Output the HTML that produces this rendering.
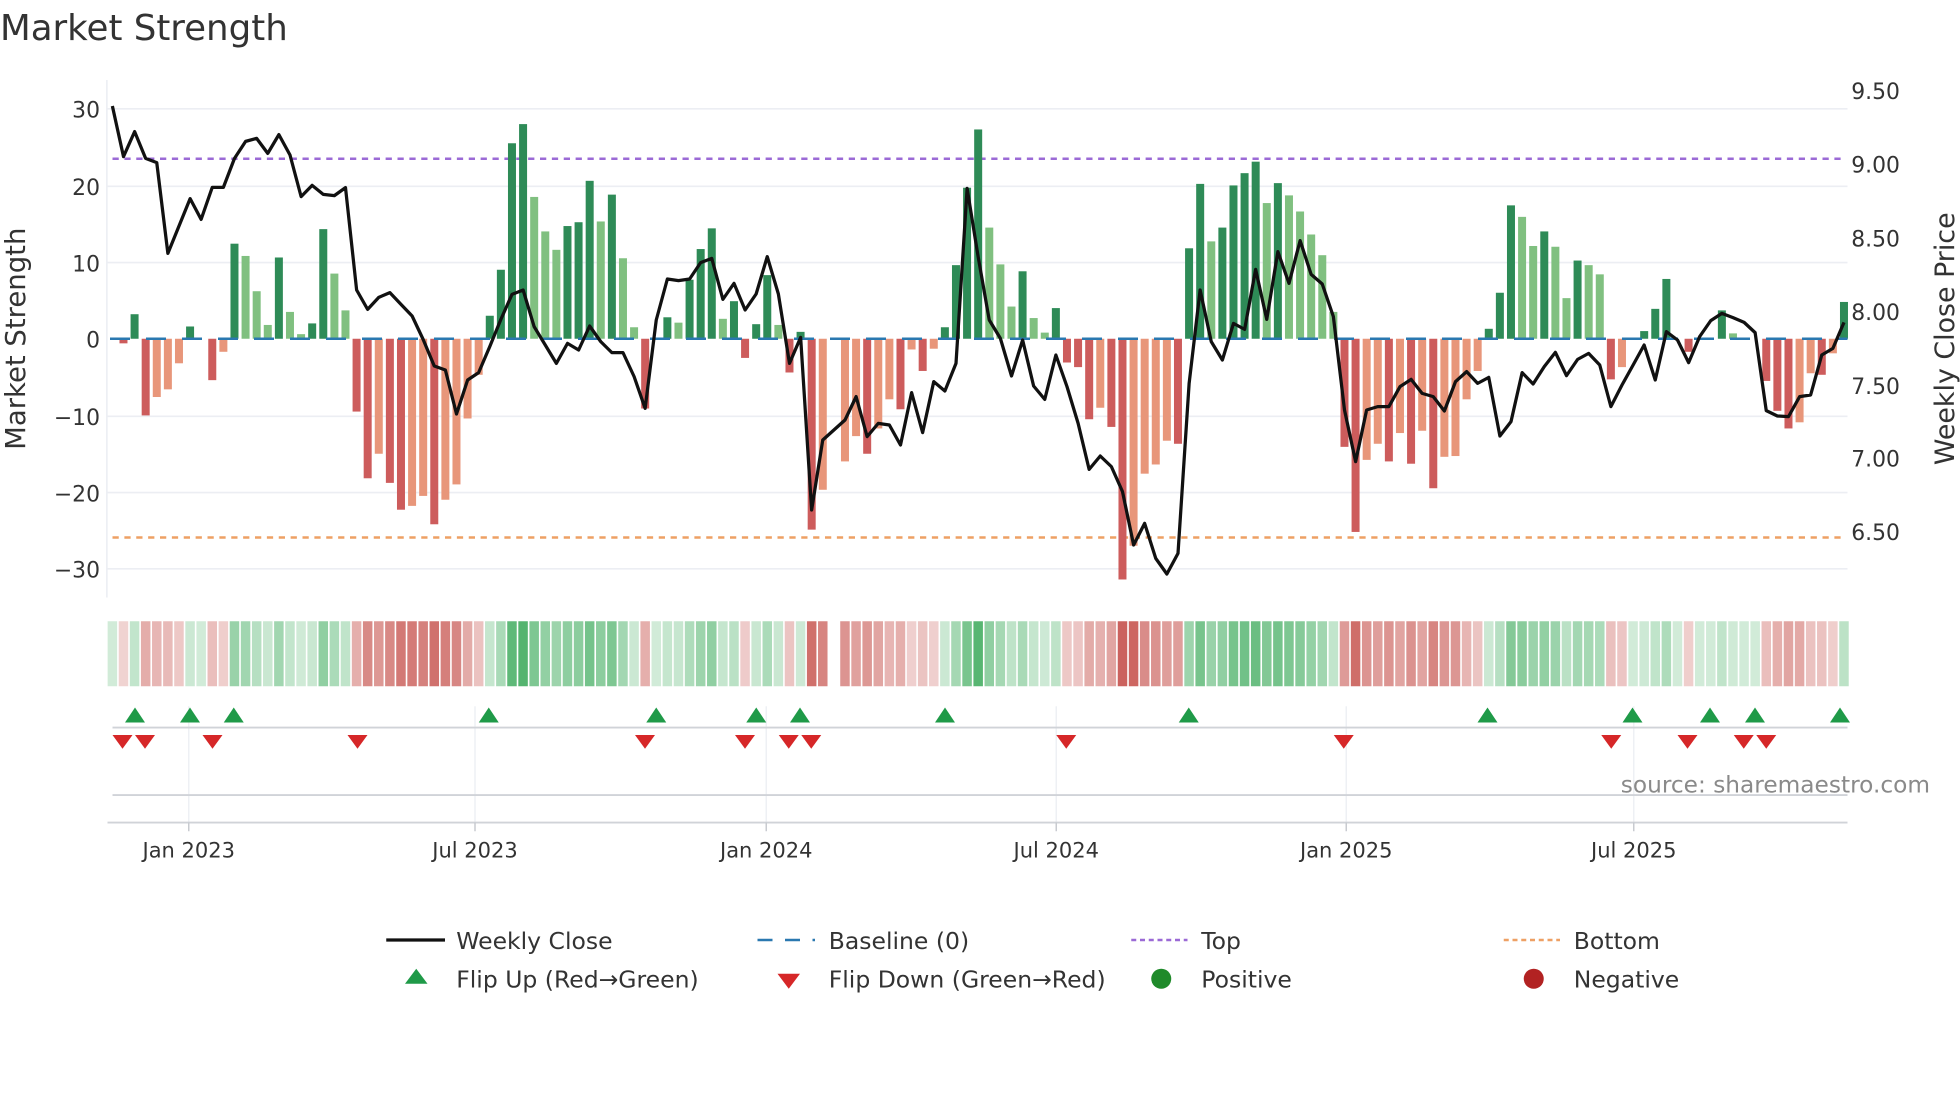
<!DOCTYPE html>
<html><head><meta charset="utf-8">
<style>
html,body{margin:0;padding:0;background:#fff;}
svg{display:block;}
text{font-family:"DejaVu Sans","Liberation Sans",sans-serif;fill:#333;}
</style></head>
<body>
<svg id="s" xmlns="http://www.w3.org/2000/svg" width="1960" height="1102" viewBox="0 0 1568 881.6">
<rect width="1568" height="882" fill="#fff"/>
<text x="0" y="32" font-size="28.5">Market Strength</text>
<g id="grid" stroke="#eceef3" stroke-width="1.3">
<line x1="86" y1="87" x2="1478" y2="87"/><line x1="86" y1="149" x2="1478" y2="149"/>
<line x1="86" y1="210" x2="1478" y2="210"/><line x1="86" y1="333" x2="1478" y2="333"/>
<line x1="86" y1="394" x2="1478" y2="394"/><line x1="86" y1="455" x2="1478" y2="455"/>
<line x1="85.5" y1="64" x2="85.5" y2="478"/>
</g>
<g font-size="17.5" text-anchor="end">
<text x="80" y="94">30</text><text x="80" y="156">20</text><text x="80" y="217">10</text>
<text x="80" y="278">0</text><text x="80" y="340">−10</text><text x="80" y="401">−20</text><text x="80" y="462">−30</text>
</g>
<g font-size="17.5">
<text x="1481" y="79">9.50</text><text x="1481" y="138">9.00</text><text x="1481" y="197">8.50</text>
<text x="1481" y="256">8.00</text><text x="1481" y="315">7.50</text><text x="1481" y="373">7.00</text><text x="1481" y="432">6.50</text>
</g>
<text transform="translate(20,271) rotate(-90)" font-size="22" text-anchor="middle">Market Strength</text>
<text transform="translate(1563,271) rotate(-90)" font-size="21.5" text-anchor="middle">Weekly Close Price</text>
<line x1="90" y1="127" x2="1476" y2="127" stroke="#9b6ad6" stroke-width="2" stroke-dasharray="5,4.5"/>
<line x1="90" y1="430" x2="1476" y2="430" stroke="#eea064" stroke-width="2" stroke-dasharray="5,4.5"/>
<g id="bars"></g>
<line x1="88" y1="271" x2="1478" y2="271" stroke="#2a78b0" stroke-width="2" stroke-dasharray="16,12.8"/>
<polyline id="price" fill="none" stroke="#111" stroke-width="2.6" stroke-linejoin="round"/>
<g id="heat"></g>
<g stroke="#eef0f4" stroke-width="1.2">
<line x1="151" y1="565" x2="151" y2="658"/><line x1="380" y1="565" x2="380" y2="658"/>
<line x1="613" y1="565" x2="613" y2="658"/><line x1="845" y1="565" x2="845" y2="658"/>
<line x1="1077" y1="565" x2="1077" y2="658"/><line x1="1307" y1="565" x2="1307" y2="658"/>
</g>
<line x1="90" y1="582" x2="1478" y2="582" stroke="#d0d3d8" stroke-width="1.5"/>
<line x1="90" y1="636" x2="1478" y2="636" stroke="#d0d3d8" stroke-width="1.5"/>
<line x1="86" y1="658" x2="1478" y2="658" stroke="#d0d3d8" stroke-width="1.5"/>
<g stroke="#c8cbd0" stroke-width="1.2">
<line x1="151" y1="658" x2="151" y2="665"/><line x1="380" y1="658" x2="380" y2="665"/>
<line x1="613" y1="658" x2="613" y2="665"/><line x1="845" y1="658" x2="845" y2="665"/>
<line x1="1077" y1="658" x2="1077" y2="665"/><line x1="1307" y1="658" x2="1307" y2="665"/>
</g>
<g id="marks"></g>
<g font-size="16.8" text-anchor="middle">
<text x="151" y="686">Jan 2023</text><text x="380" y="686">Jul 2023</text><text x="613" y="686">Jan 2024</text>
<text x="845" y="686">Jul 2024</text><text x="1077" y="686">Jan 2025</text><text x="1307" y="686">Jul 2025</text>
</g>
<text x="1544" y="634" font-size="18.6" text-anchor="end" style="fill:#8a8a8a">source: sharemaestro.com</text>
<g font-size="18.8">
<line x1="309" y1="752" x2="356" y2="752" stroke="#111" stroke-width="2.6"/>
<text x="365" y="759">Weekly Close</text>
<line x1="606" y1="752" x2="652" y2="752" stroke="#2a78b0" stroke-width="2" stroke-dasharray="12,10"/>
<text x="663" y="759">Baseline (0)</text>
<line x1="905" y1="752" x2="950" y2="752" stroke="#9b6ad6" stroke-width="2" stroke-dasharray="4,3"/>
<text x="961" y="759">Top</text>
<line x1="1203" y1="752" x2="1248" y2="752" stroke="#eea064" stroke-width="2" stroke-dasharray="4,3"/>
<text x="1259" y="759">Bottom</text>
<polygon points="324,787 342,787 333,775" fill="#1f9a48"/>
<text x="365" y="790">Flip Up (Red→Green)</text>
<polygon points="622,779 640,779 631,791" fill="#d62728"/>
<text x="663" y="790">Flip Down (Green→Red)</text>
<circle cx="929" cy="783" r="8" fill="#1f8a2a"/>
<text x="961" y="790">Positive</text>
<circle cx="1227" cy="783" r="8" fill="#b22222"/>
<text x="1259" y="790">Negative</text>
</g>
</svg>
<script>
(function(){
var NS="http://www.w3.org/2000/svg";
var v=[0,-0.6,3.2,-10,-7.6,-6.6,-3.2,1.6,0,-5.4,-1.7,12.4,10.8,6.2,1.8,10.6,3.5,0.6,2,14.3,8.5,3.7,-9.5,-18.2,-15,-18.8,-22.3,-21.8,-20.5,-24.2,-21,-19,-10.4,-4.7,3,9,25.5,28,18.5,14,11.6,14.7,15.2,20.6,15.3,18.8,10.5,1.5,-9.1,0,2.8,2.1,7.7,11.7,14.4,2.6,4.9,-2.5,1.9,8.3,1.8,-4.4,0.9,-24.9,-19.7,0,-16,-12.7,-15,-11.7,-7.9,-9.2,-1.4,-4.2,-1.3,1.5,9.6,19.7,27.3,14.5,9.7,4.2,8.8,2.7,0.8,4.0,-3.1,-3.7,-10.5,-9,-11.5,-31.4,-27,-17.6,-16.4,-13.3,-13.7,11.8,20.2,12.7,14.5,20,21.6,23.1,17.7,20.3,18.7,16.6,13.6,10.9,3.5,-14.1,-25.2,-15.8,-13.7,-16,-12.3,-16.3,-12,-19.5,-15.4,-15.3,-7.9,-4.2,1.3,6,17.4,15.9,12.1,14,12,5.3,10.2,9.6,8.4,-5.3,-3.7,0,1,3.9,7.8,0,-1.7,0,0,3.7,0.7,0,0,-5.5,-9.4,-11.7,-10.9,-4.5,-4.7,-1.9,4.8];
var t="-rgrsssg-r"+"sglllgllgg"+"llrrsrrssr"+"ssssggggll"+"lggglgllr-"+"glggglgrgg"+"lrgrs-ssrs"+"srsrsggggl"+"llgllgrrrs"+"rrssssrggl"+"gggglgllll"+"lrrssrsrsr"+"ssssgggllg"+"llgllrs-gg"+"g-r--gl--r"+"rrssrsg";
var p=[48,200,125,205,218,490,408,326,388,292,292,205,154,145,190,134,195,320,286,313,317,293,600,658,622,608,643,678,748,828,840,972,870,848,770,688,613,600,710,765,820,
760,780,708,755,788,788,860,955,690,567,572,567,518,505,628,580,660,612,500,612,820,742,1260,1050,1020,990,920,1040,1000,1005,1065,908,1028,875,903,820,295,500,
690,745,858,750,888,928,795,890,1000,1138,1098,1130,1205,1365,1300,1405,1452,1390,880,600,755,810,700,718,538,688,485,580,452,553,582,680,960,1115,960,950,950,890,868,
910,920,963,875,845,880,862,1038,995,848,882,830,787,857,808,790,825,950,885,825,765,870,725,750,818,740,692,670,683,697,728,962,978,980,920,915,795,775,697];
var col={g:"#2e8b57",l:"#80c080",r:"#cd5c5c",s:"#e8967a"};
var bars=document.getElementById("bars"),heat=document.getElementById("heat");
var pts=[];
for(var i=0;i<v.length;i++){
 var x=89.9+i*8.88;
 var c=t.charAt(i);
 if(v[i]!=0&&col[c]){
  var h=Math.abs(v[i])*6.133, y=v[i]>0?271-h:271;
  var r=document.createElementNS(NS,"rect");
  r.setAttribute("x",(x-3.2).toFixed(2));r.setAttribute("y",y.toFixed(2));
  r.setAttribute("width","6.4");r.setAttribute("height",h.toFixed(2));r.setAttribute("fill",col[c]);
  bars.appendChild(r);
 }
 if(!(i==65)){
  var a=Math.abs(v[i]), op=0.22+0.6*Math.min(a/28,1);
  var hr=document.createElementNS(NS,"rect");
  hr.setAttribute("x",(x-3.8).toFixed(2));hr.setAttribute("y","497");
  hr.setAttribute("width","7.6");hr.setAttribute("height","52");
  hr.setAttribute("fill",v[i]>=0?"#2ea44f":"#c0403a");hr.setAttribute("fill-opacity",op.toFixed(2));
  heat.appendChild(hr);
 }
 if(i<p.length) pts.push(x.toFixed(1)+","+(72+p[i]/3.75).toFixed(1));
}
document.getElementById("price").setAttribute("points",pts.join(" "));
var ups=[108,152,187,391,525,605,640,756,951,1190,1306,1368,1404,1472];
var dns=[98,116,170,286,516,596,631,649,853,1075,1289,1350,1395,1413];
var m=document.getElementById("marks");
ups.forEach(function(x){var g=document.createElementNS(NS,"polygon");
 g.setAttribute("points",(x-8)+",578 "+(x+8)+",578 "+x+",566");g.setAttribute("fill","#1f9a48");m.appendChild(g);});
dns.forEach(function(x){var g=document.createElementNS(NS,"polygon");
 g.setAttribute("points",(x-8)+",588 "+(x+8)+",588 "+x+",599");g.setAttribute("fill","#d62728");m.appendChild(g);});
})();
</script>
</body></html>
